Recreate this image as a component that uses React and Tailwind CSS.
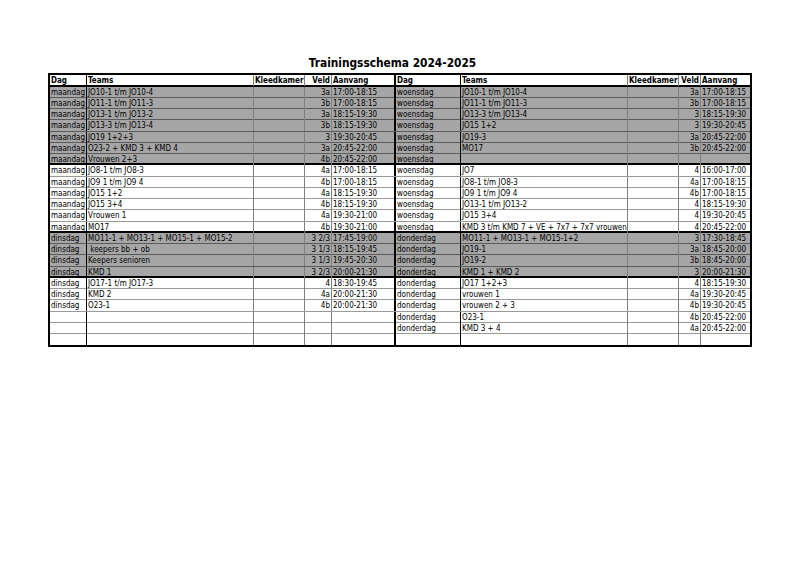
import React from 'react'

const rows = [
  ['maandag', 'JO10-1 t/m JO10-4', '', '3a', '17:00-18:15', 'woensdag', 'JO10-1 t/m JO10-4', '', '3a', '17:00-18:15'],
  ['maandag', 'JO11-1 t/m JO11-3', '', '3b', '17:00-18:15', 'woensdag', 'JO11-1 t/m JO11-3', '', '3b', '17:00-18:15'],
  ['maandag', 'JO13-1 t/m JO13-2', '', '3a', '18:15-19:30', 'woensdag', 'JO13-3 t/m JO13-4', '', '3', '18:15-19:30'],
  ['maandag', 'JO13-3 t/m JO13-4', '', '3b', '18:15-19:30', 'woensdag', 'JO15 1+2', '', '3', '19:30-20:45'],
  ['maandag', 'JO19 1+2+3', '', '3', '19:30-20:45', 'woensdag', 'JO19-3', '', '3a', '20:45-22:00'],
  ['maandag', 'O23-2 + KMD 3 + KMD 4', '', '3a', '20:45-22:00', 'woensdag', 'MO17', '', '3b', '20:45-22:00'],
  ['maandag', 'Vrouwen 2+3', '', '4b', '20:45-22:00', 'woensdag', '', '', '', ''],
  ['maandag', 'JO8-1 t/m JO8-3', '', '4a', '17:00-18:15', 'woensdag', 'JO7', '', '4', '16:00-17:00'],
  ['maandag', 'JO9 1 t/m JO9 4', '', '4b', '17:00-18:15', 'woensdag', 'JO8-1 t/m JO8-3', '', '4a', '17:00-18:15'],
  ['maandag', 'JO15 1+2', '', '4a', '18:15-19:30', 'woensdag', 'JO9 1 t/m JO9 4', '', '4b', '17:00-18:15'],
  ['maandag', 'JO15 3+4', '', '4b', '18:15-19:30', 'woensdag', 'JO13-1 t/m JO13-2', '', '4', '18:15-19:30'],
  ['maandag', 'Vrouwen 1', '', '4a', '19:30-21:00', 'woensdag', 'JO15 3+4', '', '4', '19:30-20:45'],
  ['maandag', 'MO17', '', '4b', '19:30-21:00', 'woensdag', 'KMD 3 t/m KMD 7 + VE + 7x7 + 7x7 vrouwen', '', '4', '20:45-22:00'],
  ['dinsdag', 'MO11-1 + MO13-1 + MO15-1 + MO15-2', '', '3 2/3', '17:45-19:00', 'donderdag', 'MO11-1 + MO13-1 + MO15-1+2', '', '3', '17:30-18:45'],
  ['dinsdag', '\u00a0keepers bb + ob', '', '3 1/3', '18:15-19:45', 'donderdag', 'JO19-1', '', '3a', '18:45-20:00'],
  ['dinsdag', 'Keepers senioren', '', '3 1/3', '19:45-20:30', 'donderdag', 'JO19-2', '', '3b', '18:45-20:00'],
  ['dinsdag', 'KMD 1', '', '3 2/3', '20:00-21:30', 'donderdag', 'KMD 1 + KMD 2', '', '3', '20:00-21:30'],
  ['dinsdag', 'JO17-1 t/m JO17-3', '', '4', '18:30-19:45', 'donderdag', 'JO17 1+2+3', '', '4', '18:15-19:30'],
  ['dinsdag', 'KMD 2', '', '4a', '20:00-21:30', 'donderdag', 'vrouwen 1', '', '4a', '19:30-20:45'],
  ['dinsdag', 'O23-1', '', '4b', '20:00-21:30', 'donderdag', 'vrouwen 2 + 3', '', '4b', '19:30-20:45'],
  ['', '', '', '', '', 'donderdag', 'O23-1', '', '4b', '20:45-22:00'],
  ['', '', '', '', '', 'donderdag', 'KMD 3 + 4', '', '4a', '20:45-22:00'],
  ['', '', '', '', '', '', '', '', '', ''],
]

const header = ['Dag', 'Teams', 'Kleedkamer', 'Veld', 'Aanvang', 'Dag', 'Teams', 'Kleedkamer', 'Veld', 'Aanvang']

// cell border per column
const colBorder = [
  'border-r border-black',
  'border-r border-[#808080]',
  'border-r border-[#808080]',
  'border-r border-[#808080]',
  'border-r-2 border-black',
  'border-r border-black',
  'border-r border-[#808080]',
  'border-r border-[#808080]',
  'border-r border-[#808080]',
  '',
]

const isGray = (i) => i < 7 || (i >= 13 && i < 17)
const groupEnd = (i) => i === 6 || i === 12 || i === 16

function Row({ cells, bold, gray }) {
  return (
    <div
      className={`grid h-full grid-cols-[37px_167px_51px_27px_64px_65px_167px_51px_22px_49px] ${gray ? 'bg-[#a6a6a6]' : 'bg-white'}`}
    >
      {cells.map((c, j) => (
        <div
          key={j}
          className={`${colBorder[j]} overflow-visible whitespace-nowrap px-[1px] leading-[11px] ${
            j === 3 || j === 8 ? 'text-right' : 'text-left'
          } ${bold ? 'font-bold' : ''}`}
        >
          {c}
        </div>
      ))}
    </div>
  )
}

export default function App() {
  return (
    <div className="w-[800px] h-[566px] bg-white text-black" style={{ fontFamily: '"DejaVu Sans Condensed", "DejaVu Sans", sans-serif' }}>
      <div className="pt-[54px] flex flex-col items-start pl-[48px]">
        <div className="w-[704px] flex justify-center pr-[15px] h-[19px]">
          <h1 className="text-[11.8px] font-bold leading-[18px]">Trainingsschema 2024-2025</h1>
        </div>
        <div className="w-[704px] border-2 border-black text-[8px]">
          <div className="h-[11.6px] border-b-2 border-black">
            <Row cells={header} bold gray={false} />
          </div>
          {rows.map((r, i) => (
            <div
              key={i}
              className={`h-[11.25px] ${
                i === rows.length - 1 ? '' : groupEnd(i) ? 'border-b-2 border-black' : isGray(i) ? 'border-b border-[#5a5a5a]' : 'border-b border-[#9a9a9a]'
              }`}
            >
              <Row cells={r} gray={isGray(i)} />
            </div>
          ))}
        </div>
      </div>
    </div>
  )
}
